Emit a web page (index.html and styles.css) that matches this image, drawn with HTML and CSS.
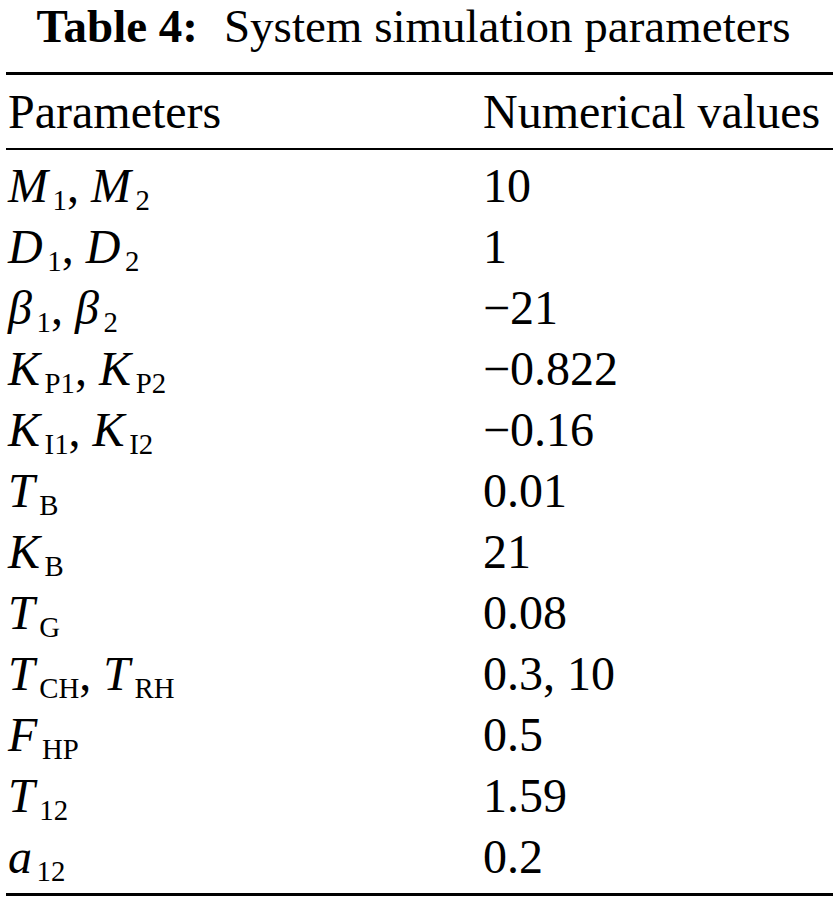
FILE: index.html
```html
<!DOCTYPE html>
<html lang="en">
<head>
    <meta charset="UTF-8">
    <title>Table 4: System simulation parameters</title>
    <link rel="stylesheet" href="styles.css">
</head>
<body>
    <div class="sheet">
        <div class="caption"><b>Table 4:</b><span class="gap"></span>System simulation parameters</div>
        <table class="params">
            <thead>
                <tr>
                    <th>Parameters</th>
                    <th>Numerical values</th>
                </tr>
            </thead>
            <tbody>
                <tr><td><i>M</i><sub>1</sub>, <i>M</i><sub>2</sub></td><td>10</td></tr>
                <tr><td><i>D</i><sub>1</sub>, <i>D</i><sub>2</sub></td><td>1</td></tr>
                <tr><td><i>β</i><sub>1</sub>, <i>β</i><sub>2</sub></td><td>−21</td></tr>
                <tr><td><i>K</i><sub>P1</sub>, <i>K</i><sub>P2</sub></td><td>−0.822</td></tr>
                <tr><td><i>K</i><sub>I1</sub>, <i>K</i><sub>I2</sub></td><td>−0.16</td></tr>
                <tr><td><i>T</i><sub>B</sub></td><td>0.01</td></tr>
                <tr><td><i>K</i><sub>B</sub></td><td>21</td></tr>
                <tr><td><i>T</i><sub>G</sub></td><td>0.08</td></tr>
                <tr><td><i>T</i><sub>CH</sub>, <i>T</i><sub>RH</sub></td><td>0.3, 10</td></tr>
                <tr><td><i>F</i><sub>HP</sub></td><td>0.5</td></tr>
                <tr><td><i>T</i><sub>12</sub></td><td>1.59</td></tr>
                <tr><td><i>a</i><sub>12</sub></td><td>0.2</td></tr>
            </tbody>
        </table>
    </div>
</body>
</html>
```

FILE: styles.css
```css
body {
    margin: 0;
    background: #fff;
    color: #000;
    font-family: "Liberation Serif", "Times New Roman", serif;
}
.sheet {
    width: 827px;
    margin-left: 6px;
}
.caption {
    font-size: 47px;
    line-height: 52px;
    text-align: center;
    margin-bottom: 20px;
    padding-right: 12px;
}
.caption .gap {
    display: inline-block;
    width: 26px;
}
.params {
    width: 100%;
    border-collapse: collapse;
    border-top: 3px solid #000;
    border-bottom: 3px solid #000;
    font-size: 48px;
}
.params th {
    font-weight: normal;
    text-align: left;
    height: 73px;
    padding: 0 0 0 2px;
    line-height: 48px;
    border-bottom: 2px solid #000;
}
.params th:last-child,
.params td:last-child {
    width: 350px;
    padding-left: 0;
}
.params td {
    height: 61px;
    padding: 0 0 0 2px;
    line-height: 48px;
    vertical-align: middle;
}
.params tbody tr:first-child td {
    padding-top: 5px;
}
.params tbody tr:last-child td {
    padding-bottom: 6px;
}
.params sub {
    font-size: 0.6em;
    line-height: 0;
    vertical-align: -0.28em;
    margin-left: 0.16em;
}
```
